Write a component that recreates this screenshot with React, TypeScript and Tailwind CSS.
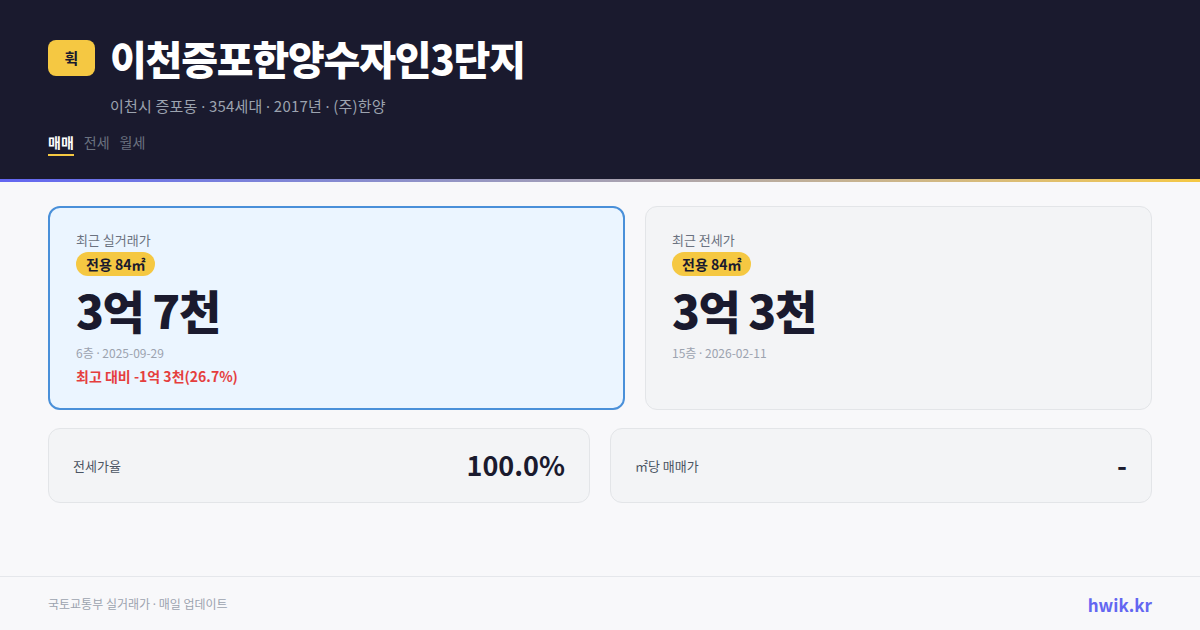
const font = {
  fontFamily: '"Noto Sans CJK KR", "Noto Sans", sans-serif',
};

// 가운뎃점은 폭이 좁은 라틴 글꼴로
const Dot = () => <span style={{ fontFamily: '"Noto Sans", sans-serif' }}>·</span>;

const PriceCard = ({
  label,
  price,
  meta,
  diff,
  active,
}: {
  label: string;
  price: string;
  meta: [string, string];
  diff?: string;
  active?: boolean;
}) => (
  <div
    className={
      active
        ? "h-[204px] rounded-xl border-2 border-[#4a90d9] bg-[#ebf5ff] px-[26px] pt-[23px]"
        : "h-[204px] rounded-xl border border-[#e3e5e8] bg-[#f3f4f6] px-[26px] pt-[24px]"
    }
  >
    <div className="text-[13px] leading-[18px] text-[#6b7280]">{label}</div>
    <div className="mt-[3px] inline-flex h-[24px] items-center rounded-full bg-[#f5c842] px-[10px] text-[14px] font-bold text-[#1a1a2e]">
      전용 84㎡
    </div>
    <div className="mt-[2px] text-[46px] font-black leading-[62px] tracking-[-1.5px] text-[#1a1a2e]">
      {price}
    </div>
    <div className="mt-[4px] text-[12px] leading-[18px] text-[#9ca3af]">
      {meta[0]} <Dot /> {meta[1]}
    </div>
    {diff && (
      <div className="mt-[3px] text-[14px] font-bold leading-[20px] text-[#e53e3e]">
        {diff}
      </div>
    )}
  </div>
);

const StatCard = ({ label, value }: { label: string; value: string }) => (
  <div className="flex h-[75px] items-center justify-between rounded-xl border border-[#e3e5e8] bg-[#f3f4f6] px-[24px]">
    <span className="text-[13px] text-[#4b5563]">{label}</span>
    <span className="text-[27px] font-bold text-[#1a1a2e]">{value}</span>
  </div>
);

export default function App() {
  return (
    <div className="flex h-[630px] w-[1200px] flex-col bg-[#f8f8fa]" style={font}>
      {/* 헤더 */}
      <div className="h-[179px] bg-[#1a1a2e] px-[48px] pt-[30px]">
        <div className="flex items-center gap-[15px]">
          <div className="flex h-[36px] w-[47px] items-center justify-center rounded-lg bg-[#f5c842] text-[15px] font-bold text-[#1a1a2e]">
            휙
          </div>
          <h1 className="text-[40px] font-black leading-[56px] tracking-[-1.2px] text-white">
            이천증포한양수자인3단지
          </h1>
        </div>
        <div className="ml-[62px] mt-[9px] text-[15px] tracking-[0.2px] text-[#9ca3af]">
          이천시 증포동 <Dot /> 354세대 <Dot /> 2017년 <Dot /> (주)한양
        </div>
        <div className="mt-[14px] flex gap-[10px] text-[14px]">
          <span className="border-b-2 border-[#f5c842] pb-[1px] font-bold text-white">매매</span>
          <span className="text-[#6b7280]">전세</span>
          <span className="text-[#6b7280]">월세</span>
        </div>
      </div>
      <div className="h-[3px] bg-gradient-to-r from-[#6366f1] to-[#f5c842]" />

      {/* 본문 */}
      <div className="flex-1 px-[48px] pt-[24px]">
        <div className="grid grid-cols-[577px_507px] gap-[20px]">
          <PriceCard
            active
            label="최근 실거래가"
            price="3억 7천"
            meta={["6층", "2025-09-29"]}
            diff="최고 대비 -1억 3천(26.7%)"
          />
          <PriceCard label="최근 전세가" price="3억 3천" meta={["15층", "2026-02-11"]} />
        </div>
        <div className="mt-[18px] grid grid-cols-2 gap-[20px]">
          <StatCard label="전세가율" value="100.0%" />
          <StatCard label="㎡당 매매가" value="-" />
        </div>
      </div>

      {/* 푸터 */}
      <div className="flex h-[54px] items-center justify-between border-t border-[#e5e7eb] px-[48px] pt-[2px]">
        <span className="text-[12px] text-[#9ca3af]">
          국토교통부 실거래가 <Dot /> 매일 업데이트
        </span>
        <span className="text-[17px] font-bold text-[#6366f1]">hwik.kr</span>
      </div>
    </div>
  );
}
